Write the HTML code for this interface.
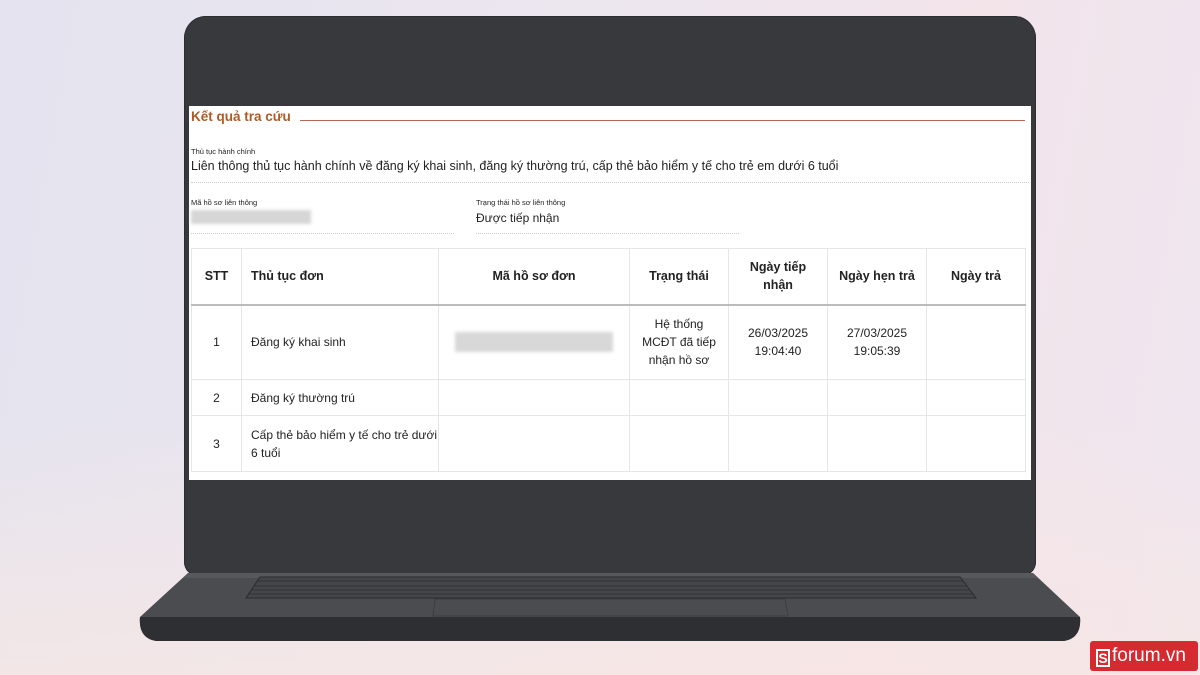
<!DOCTYPE html>
<html><head><meta charset="utf-8"><style>
*{margin:0;padding:0;box-sizing:border-box}
body{width:1200px;height:675px;overflow:hidden;position:relative;font-family:"Liberation Sans",sans-serif;
background:linear-gradient(100deg,#e4e3ef 0%,#ece6ef 45%,#f3e4ea 75%,#eee6f0 100%);}
.bgb{position:absolute;left:0;right:0;bottom:0;height:260px;background:linear-gradient(180deg,rgba(250,232,225,0),rgba(250,232,225,.6));}
.lid{position:absolute;left:184px;top:16px;width:852px;height:560px;background:#37393d;border-radius:22px 22px 14px 14px;box-shadow:0 0 0 1px #2c2d30 inset}
.scr{position:absolute;left:189px;top:106px;width:842px;height:374px;background:#fff;color:#222}
.base{position:absolute;left:138px;top:570px;width:944px;height:72px;}
.t{position:absolute;white-space:nowrap}
.blur{position:absolute;background:#d6d6d6;filter:blur(1.5px)}
table{position:absolute;left:2px;top:142px;border-collapse:collapse;font-size:12px;color:#222;table-layout:fixed}
td,th{border:1px solid #e6e6e6;text-align:center}
th{font-weight:bold;font-size:12.5px;height:56px;border-bottom:2px solid #bbb}
</style></head><body>
<div class="bgb"></div>
<div class="lid"></div>
<div class="scr">
 <div class="t" style="left:2px;top:3px;font-size:13.5px;font-weight:bold;color:#b05a25">Kết quả tra cứu</div>
 <div style="position:absolute;left:111px;top:14px;width:725px;height:1px;background:#b06a5a"></div>
 <div class="t" style="left:2px;top:41px;font-size:7.5px">Thủ tục hành chính</div>
 <div class="t" style="left:2px;top:53px;font-size:12.5px">Liên thông thủ tục hành chính về đăng ký khai sinh, đăng ký thường trú, cấp thẻ bảo hiểm y tế cho trẻ em dưới 6 tuổi</div>
 <div style="position:absolute;left:2px;top:76px;width:838px;border-top:1px dotted #ccc"></div>
 <div class="t" style="left:2px;top:92px;font-size:7.5px">Mã hồ sơ liên thông</div>
 <div class="blur" style="left:2px;top:104px;width:120px;height:14px"></div>
 <div style="position:absolute;left:2px;top:127px;width:263px;border-top:1px dotted #ccc"></div>
 <div class="t" style="left:287px;top:92px;font-size:7.5px">Trạng thái hồ sơ liên thông</div>
 <div class="t" style="left:287px;top:105px;font-size:12px">Được tiếp nhận</div>
 <div style="position:absolute;left:287px;top:127px;width:263px;border-top:1px dotted #ccc"></div>
 <table>
  <tr><th style="width:50px">STT</th><th style="width:197px;text-align:left;padding-left:9px">Thủ tục đơn</th><th style="width:191px">Mã hồ sơ đơn</th><th style="width:99px">Trạng thái</th><th style="width:99px;line-height:18px">Ngày tiếp<br>nhận</th><th style="width:99px">Ngày hẹn trả</th><th style="width:99px">Ngày trả</th></tr>
  <tr style="height:75px"><td>1</td><td style="text-align:left;padding-left:9px">Đăng ký khai sinh</td><td><div style="margin:0 auto;width:158px;height:20px;background:#d8d8d8;filter:blur(1.5px)"></div></td><td style="line-height:18px">Hệ thống<br>MCĐT đã tiếp<br>nhận hồ sơ</td><td style="line-height:18px">26/03/2025<br>19:04:40</td><td style="line-height:18px">27/03/2025<br>19:05:39</td><td></td></tr>
  <tr style="height:36px"><td>2</td><td style="text-align:left;padding-left:9px">Đăng ký thường trú</td><td></td><td></td><td></td><td></td><td></td></tr>
  <tr style="height:56px"><td>3</td><td style="text-align:left;padding-left:9px;line-height:18px;white-space:nowrap">Cấp thẻ bảo hiểm y tế cho trẻ dưới<br>6 tuổi</td><td></td><td></td><td></td><td></td><td></td></tr>
 </table>
</div>
<svg class="base" viewBox="0 0 944 72">
 <path d="M50 3 H895 L942 47 Q944 68 926 71 H18 Q0 68 2 47 Z" fill="#4a4c50"/>
 <path d="M2 47 Q0 68 18 71 H926 Q944 68 942 47 Z" fill="#2e2f32"/>
 <path d="M50 3 H895 L900 8 H45 Z" fill="#56585c"/>
 <path d="M122 7 H822 L838 28 H108 Z" fill="#44464a" stroke="#2a2b2e" stroke-width="1"/>
 <g stroke="#2a2b2e" stroke-width="0.8"><line x1="119" y1="11" x2="825" y2="11"/><line x1="116" y1="16" x2="829" y2="16"/><line x1="113" y1="20" x2="832" y2="20"/><line x1="110" y1="24" x2="835" y2="24"/></g>
 <path d="M297 29 H647 L650 46 H295 Z" fill="none" stroke="#3c3e42"/>
</svg>
<div style="position:absolute;left:1090px;top:641px;width:108px;height:30px;background:#d42a30;border-radius:3px;color:#fff;font-size:19px;line-height:30px;padding-left:6px;white-space:nowrap"><span style="display:inline-block;width:14px;height:18px;border:2px solid #fff;vertical-align:-2px;margin-right:2px;font-size:14px;line-height:14px;text-align:center;font-weight:bold">S</span>forum.vn</div>
</body></html>
